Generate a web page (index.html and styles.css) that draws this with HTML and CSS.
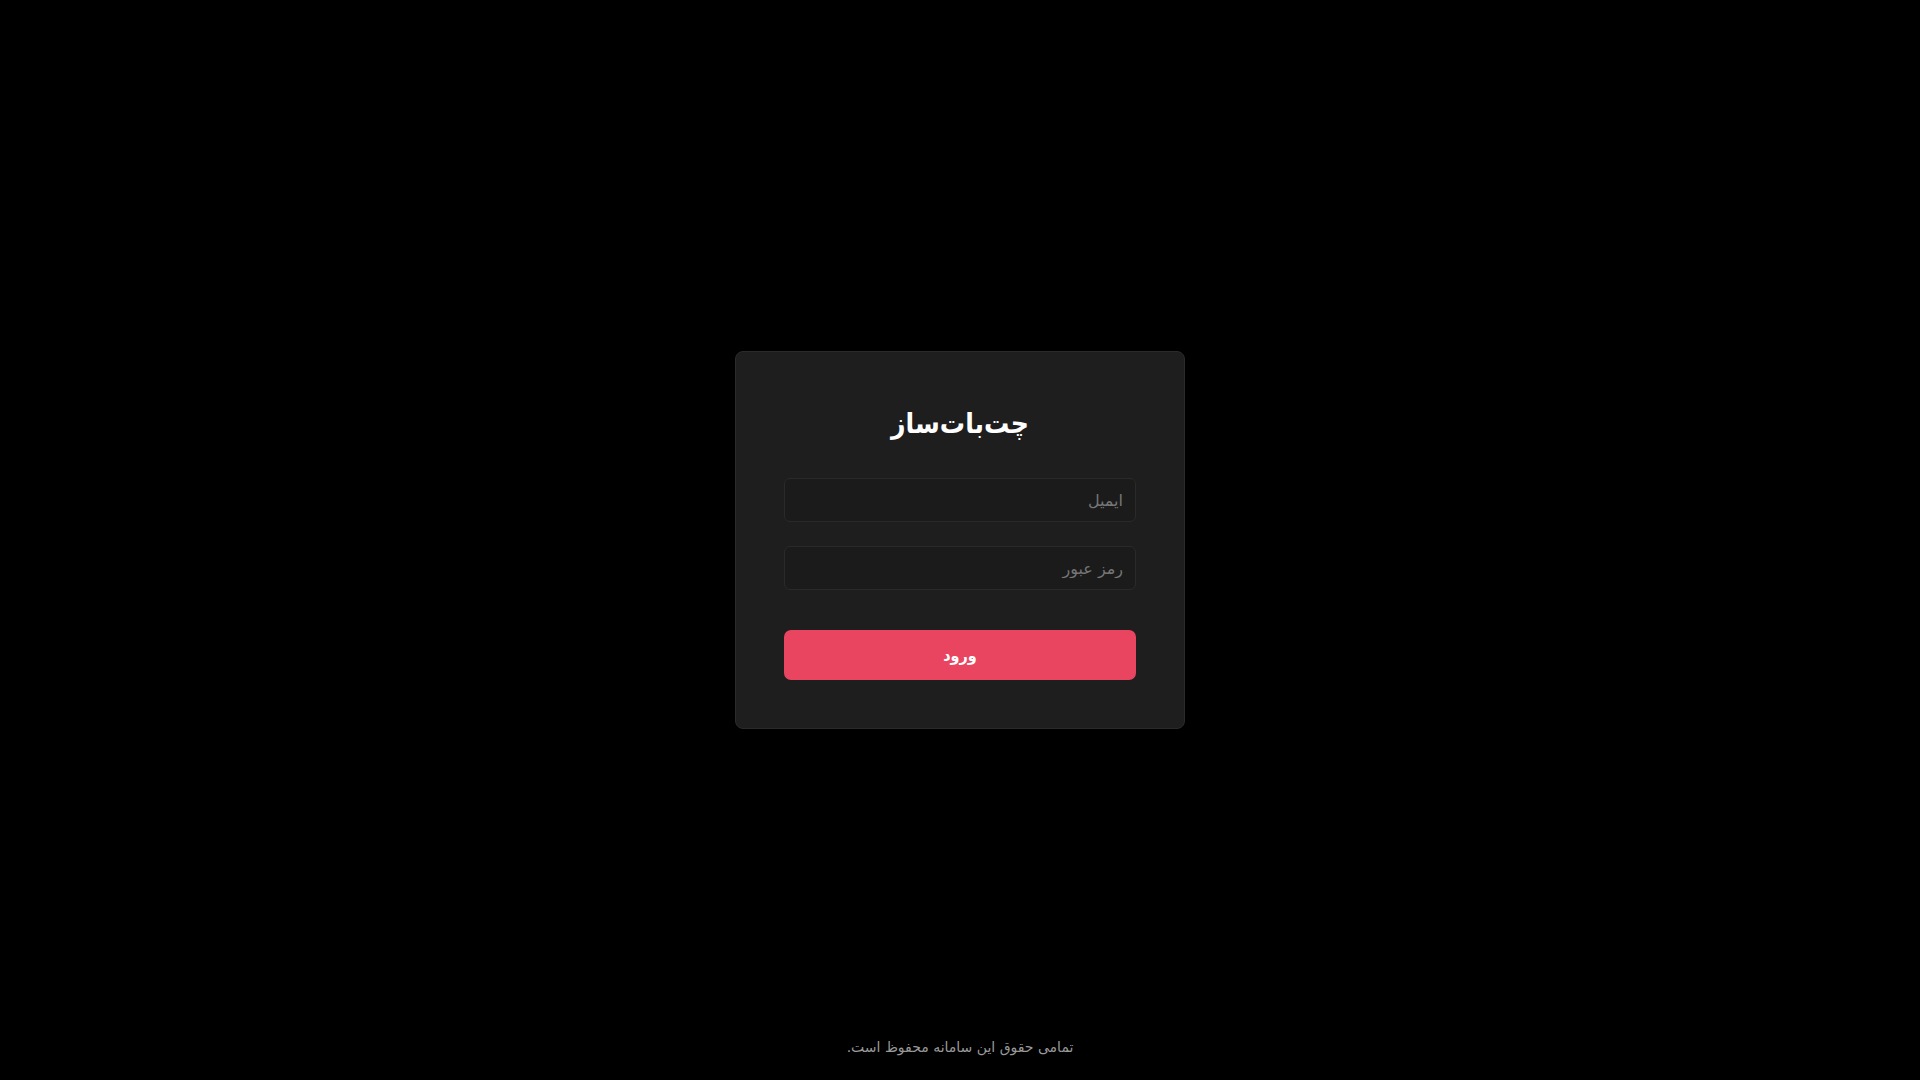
FILE: index.html
```html
<!DOCTYPE html>
<html lang="fa" dir="rtl">
<head>
<meta charset="utf-8">
<title>چت‌بات‌ساز</title>
<link rel="stylesheet" href="styles.css">
</head>
<body>
<div class="page">
  <div class="spacer"></div>
  <main class="card">
    <h1 class="title">چت‌بات‌ساز</h1>
    <form class="form">
      <input class="field" type="email" placeholder="ایمیل">
      <input class="field" type="password" placeholder="رمز عبور">
      <button class="submit" type="button">ورود</button>
    </form>
  </main>
  <footer class="footer">تمامی حقوق این سامانه محفوظ است.</footer>
</div>
</body>
</html>
```

FILE: styles.css
```css
* { box-sizing: border-box; }
html, body {
  margin: 0;
  height: 100%;
  background: #000;
  font-family: "DejaVu Sans", sans-serif;
  color: #fff;
}
.page {
  height: 100vh;
  display: grid;
  grid-template-rows: 1fr auto 1fr;
  justify-items: center;
}
.card {
  width: 450px;
  background: #1e1e1e;
  border: 1px solid #2b2b2b;
  border-radius: 8px;
  padding: 48px;
}
.title {
  margin: 0 0 31px;
  font-family: "DejaVu Sans Condensed", "DejaVu Sans", sans-serif;
  font-size: 28px;
  line-height: 47px;
  font-weight: bold;
  text-align: center;
  color: #fff;
}
.form {
  display: flex;
  flex-direction: column;
}
.field {
  height: 44px;
  margin-bottom: 24px;
  padding: 0 12px;
  background: #1b1b1b;
  border: 1px solid #2a2a2a;
  border-radius: 6px;
  color: #ddd;
  font-family: "DejaVu Sans", sans-serif;
  font-size: 16px;
  outline: none;
}
.field::placeholder { color: #767676; }
.field + .submit { margin-top: 16px; }
.submit {
  height: 50px;
  background: #e94560;
  border: none;
  border-radius: 7px;
  color: #fff;
  font-family: "DejaVu Sans Condensed", "DejaVu Sans", sans-serif;
  font-size: 16px;
  font-weight: bold;
}
.footer {
  align-self: end;
  padding-bottom: 25px;
  font-size: 14px;
  color: #9a9a9a;
}
```
